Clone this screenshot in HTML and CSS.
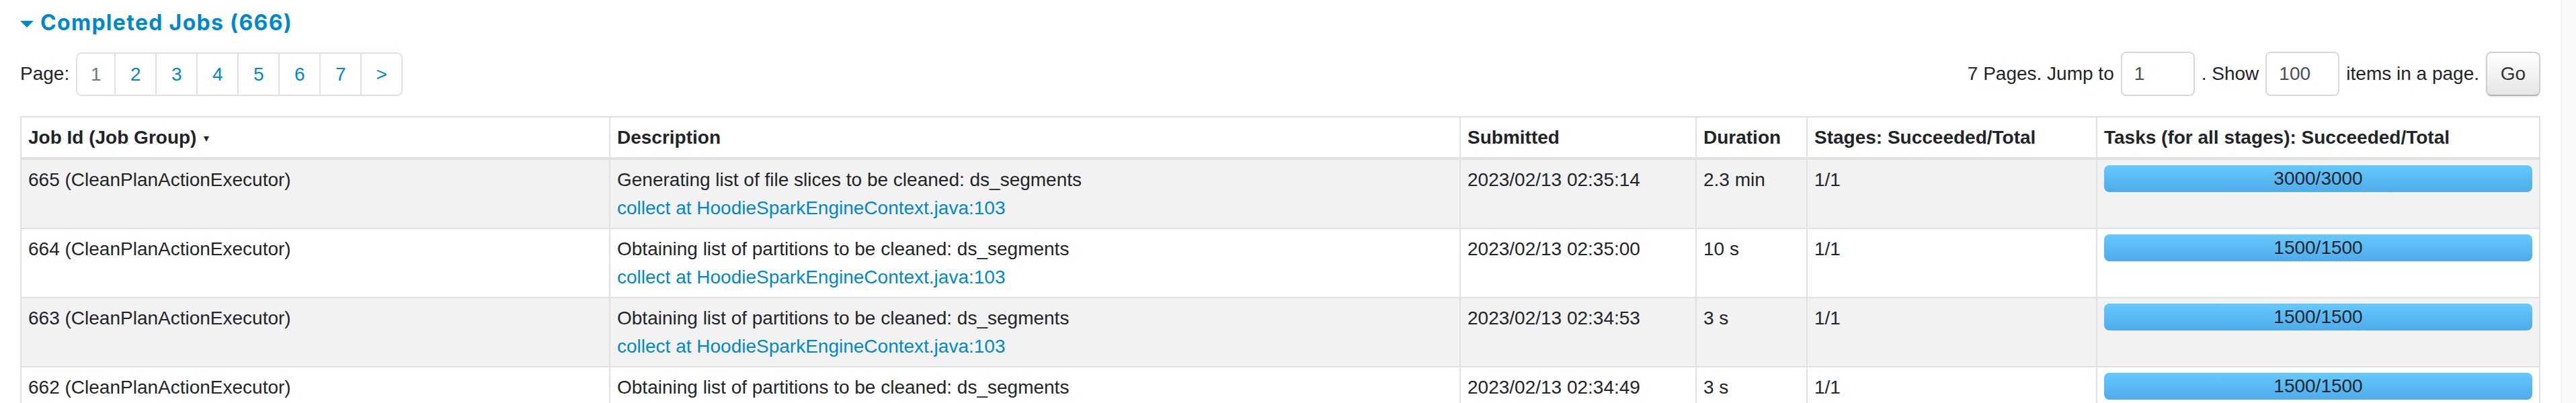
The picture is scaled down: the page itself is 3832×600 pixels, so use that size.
FILE: index.html
```html
<!DOCTYPE html>
<html>
<head>
<meta charset="utf-8">
<title>Completed Jobs</title>
<link rel="stylesheet" href="styles.css">
</head>
<body>
<div class="page">
  <main class="content">
    <h4 class="section-title"><span class="arrow-open"></span>Completed Jobs (666)</h4>
    <div class="paging">
      <div class="pager-left">
        <span class="page-label">Page:</span>
        <ul class="pagination">
          <li class="page-item active">1</li>
          <li class="page-item"><a class="page-link">2</a></li>
          <li class="page-item"><a class="page-link">3</a></li>
          <li class="page-item"><a class="page-link">4</a></li>
          <li class="page-item"><a class="page-link">5</a></li>
          <li class="page-item"><a class="page-link">6</a></li>
          <li class="page-item"><a class="page-link">7</a></li>
          <li class="page-item"><a class="page-link">&gt;</a></li>
        </ul>
      </div>
      <form class="pager-form">
        <span class="form-text">7 Pages. Jump to</span>
        <input class="form-input" type="text" value="1">
        <span class="form-text">. Show</span>
        <input class="form-input" type="text" value="100">
        <span class="form-text">items in a page.</span>
        <button class="go-btn" type="button">Go</button>
      </form>
    </div>
    <table class="jobs">
      <thead>
        <tr>
          <th class="c-id">Job Id (Job Group)<span class="sort-arrow"></span></th>
          <th class="c-desc">Description</th>
          <th class="c-sub">Submitted</th>
          <th class="c-dur">Duration</th>
          <th class="c-stg">Stages: Succeeded/Total</th>
          <th class="c-task">Tasks (for all stages): Succeeded/Total</th>
        </tr>
      </thead>
      <tbody>
        <tr class="odd">
          <td>665 (CleanPlanActionExecutor)</td>
          <td><div>Generating list of file slices to be cleaned: ds_segments</div><a class="name-link">collect at HoodieSparkEngineContext.java:103</a></td>
          <td>2023/02/13 02:35:14</td>
          <td>2.3 min</td>
          <td>1/1</td>
          <td><div class="progress">3000/3000</div></td>
        </tr>
        <tr>
          <td>664 (CleanPlanActionExecutor)</td>
          <td><div>Obtaining list of partitions to be cleaned: ds_segments</div><a class="name-link">collect at HoodieSparkEngineContext.java:103</a></td>
          <td>2023/02/13 02:35:00</td>
          <td>10 s</td>
          <td>1/1</td>
          <td><div class="progress">1500/1500</div></td>
        </tr>
        <tr class="odd">
          <td>663 (CleanPlanActionExecutor)</td>
          <td><div>Obtaining list of partitions to be cleaned: ds_segments</div><a class="name-link">collect at HoodieSparkEngineContext.java:103</a></td>
          <td>2023/02/13 02:34:53</td>
          <td>3 s</td>
          <td>1/1</td>
          <td><div class="progress">1500/1500</div></td>
        </tr>
        <tr>
          <td>662 (CleanPlanActionExecutor)</td>
          <td><div>Obtaining list of partitions to be cleaned: ds_segments</div><a class="name-link">collect at HoodieSparkEngineContext.java:103</a></td>
          <td>2023/02/13 02:34:49</td>
          <td>3 s</td>
          <td>1/1</td>
          <td><div class="progress">1500/1500</div></td>
        </tr>
      </tbody>
    </table>
  </main>
  <div class="scroll-track"></div>
</div>
</body>
</html>
```
FILE: styles.css
```css
html, body {
  margin: 0;
  padding: 0;
  height: 600px;
  overflow: hidden;
  background: #fff;
}
body {
  font-family: "Liberation Sans", Arial, sans-serif;
  font-size: 28px;
  line-height: 42px;
  color: #212529;
}
.page {
  display: flex;
  height: 600px;
}
.content {
  flex: 1;
  padding: 15px 31px 0 30px;
  min-width: 0;
}
.scroll-track {
  width: 21px;
  border-left: 1px solid #e8e8e8;
  background: #fafafa;
}
.section-title {
  margin: 0;
  display: flex;
  align-items: center;
  font-family: Inter, "Liberation Sans", sans-serif;
  font-weight: 700;
  font-size: 32px;
  line-height: 37px;
  color: #0088cc;
  letter-spacing: 1.3px;
}
.arrow-open {
  width: 0;
  height: 0;
  border-left: 10px solid transparent;
  border-right: 10px solid transparent;
  border-top: 10px solid #0088cc;
  margin: 4px 10px 0 0;
}
.paging {
  display: flex;
  justify-content: space-between;
  align-items: center;
  margin-top: 25px;
}
.pager-left {
  display: flex;
  align-items: center;
  gap: 10px;
}
.pagination {
  display: flex;
  list-style: none;
  margin: 0;
  padding: 0;
  border: 2px solid #dee2e6;
  border-radius: 8px;
  height: 61px;
}
.page-item {
  width: 59px;
  text-align: center;
  line-height: 61px;
  border-left: 2px solid #dee2e6;
  color: #0088cc;
}
.page-item:first-child {
  border-left: none;
  width: 55px;
}
.page-item.active {
  color: #6c757d;
}
.page-link {
  color: #0088cc;
  text-decoration: none;
}
.pager-form {
  display: flex;
  align-items: center;
  gap: 10px;
  margin: 0;
}
.form-input {
  box-sizing: border-box;
  width: 110px;
  height: 66px;
  border: 2px solid #d6dadf;
  border-radius: 8px;
  padding: 0 18px;
  font-family: "Liberation Sans", Arial, sans-serif;
  font-size: 28px;
  color: #495057;
  background: #fff;
}
.go-btn {
  box-sizing: border-box;
  width: 81px;
  height: 66px;
  border: 2px solid #cfcfcf;
  border-bottom-color: #b3b3b3;
  border-radius: 8px;
  background: linear-gradient(to bottom, #ffffff, #e6e6e6);
  box-shadow: 0 2px 3px rgba(0, 0, 0, 0.08);
  font-family: "Liberation Sans", Arial, sans-serif;
  font-size: 28px;
  color: #333;
  padding: 0;
}
.jobs {
  margin-top: 30px;
  width: 100%;
  table-layout: fixed;
  border-collapse: separate;
  border-spacing: 0;
  border-top: 2px solid #dee2e6;
  border-left: 2px solid #dee2e6;
}
.jobs th, .jobs td {
  box-sizing: border-box;
  text-align: left;
  vertical-align: top;
  padding: 9px 10px 8px;
  border-right: 2px solid #dee2e6;
  border-bottom: 2px solid #dee2e6;
  white-space: nowrap;
  overflow: hidden;
}
.jobs th {
  font-weight: 700;
  border-bottom-width: 4px;
}
.c-id { width: 876px; }
.c-desc { width: 1265px; }
.c-sub { width: 351px; }
.c-dur { width: 165px; }
.c-stg { width: 431px; }
.sort-arrow {
  display: inline-block;
  width: 0;
  height: 0;
  border-left: 4px solid transparent;
  border-right: 4px solid transparent;
  border-top: 8px solid #212529;
  margin-left: 11px;
  vertical-align: middle;
}
.jobs tr.odd td {
  background: #f2f2f2;
}
.name-link {
  color: #0088cc;
  text-decoration: none;
}
.progress {
  margin-top: -1px;
  height: 40px;
  line-height: 40px;
  border-radius: 8px;
  text-align: center;
  color: #212529;
  background: linear-gradient(to bottom, #65c9fd, #4fabea);
}
```
